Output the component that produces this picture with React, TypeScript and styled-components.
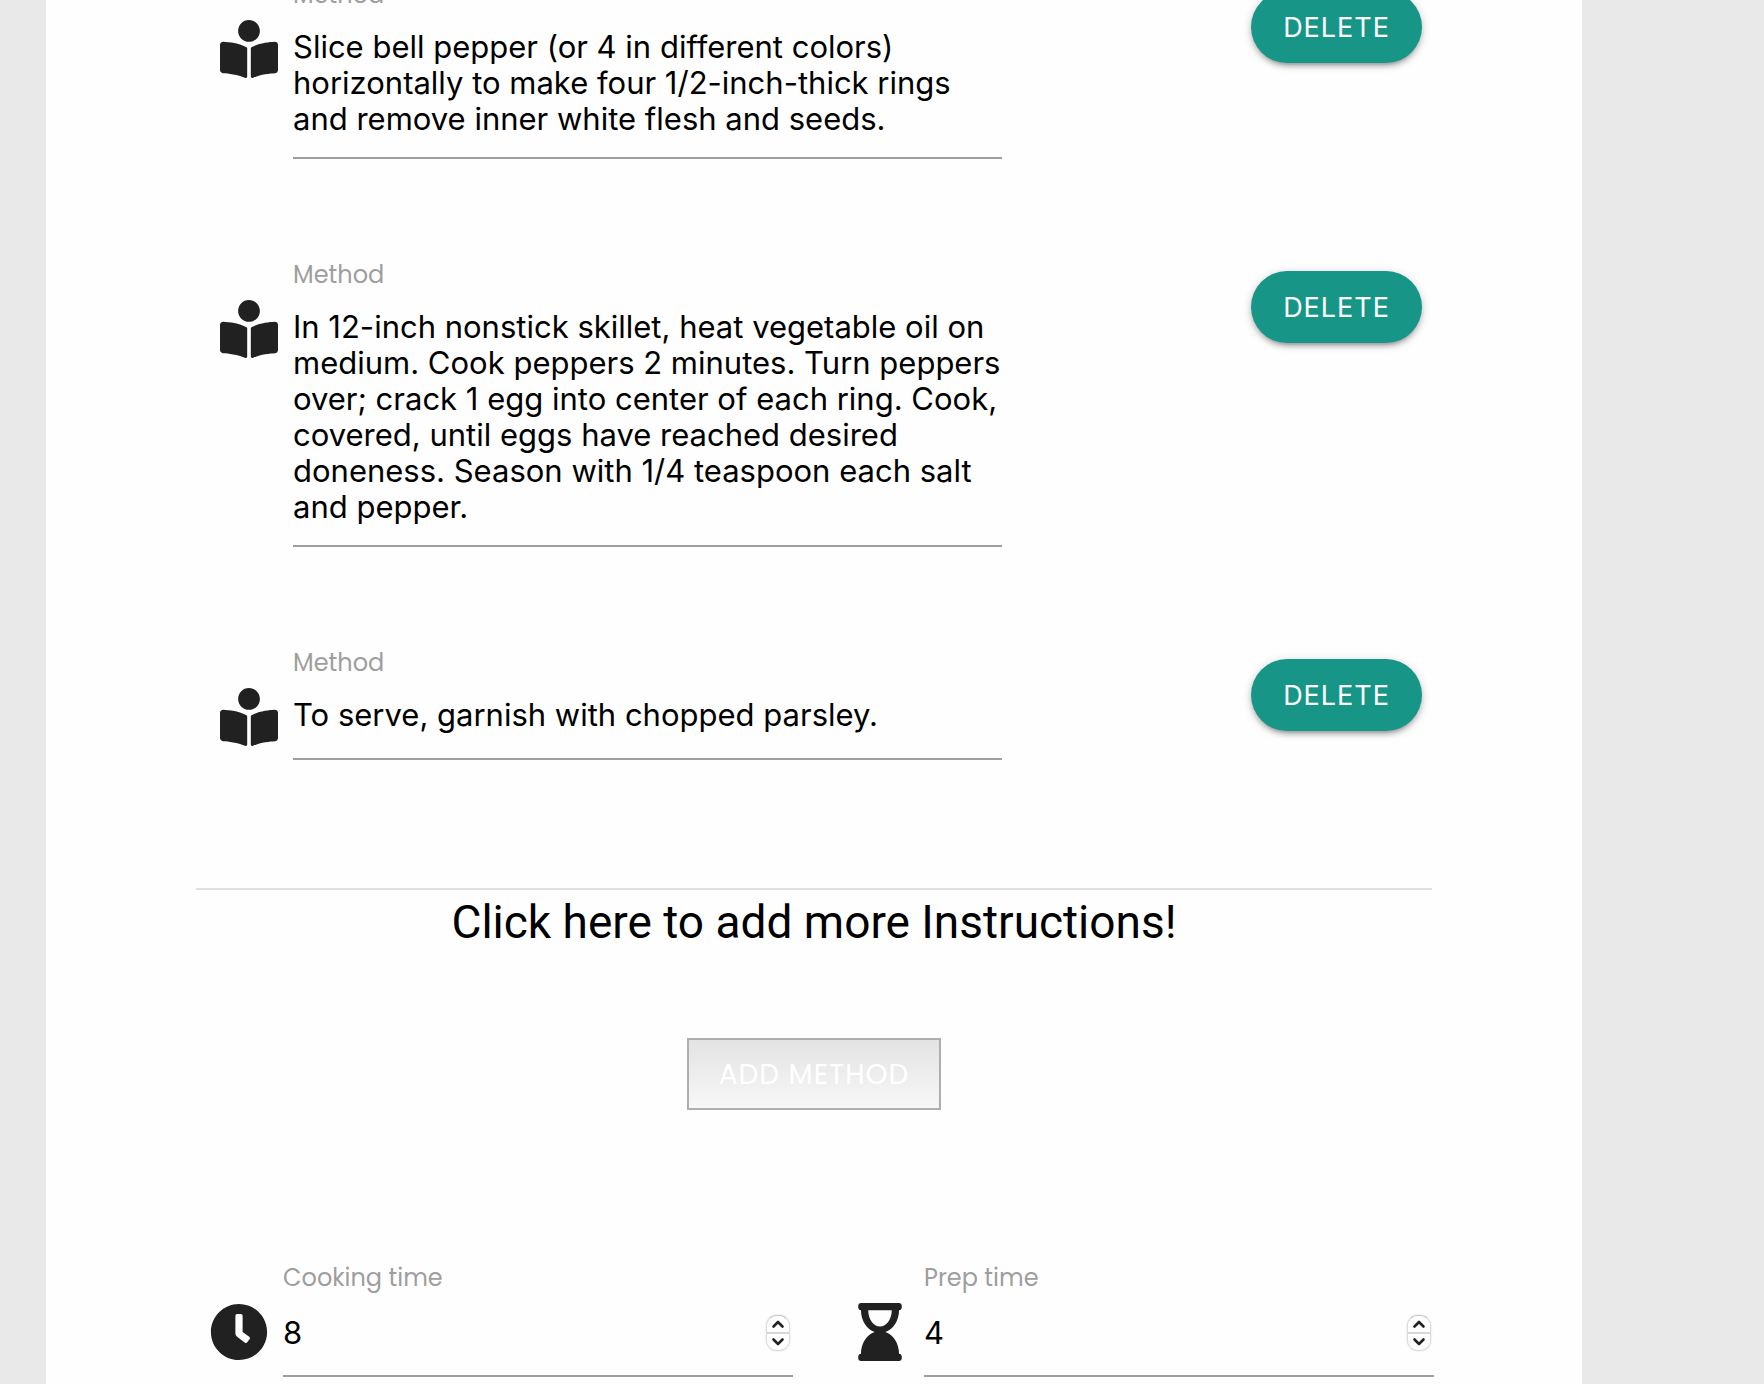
import React, { useId, useState } from "react";
import styled, { createGlobalStyle } from "styled-components";
import { FaBookReader, FaClock, FaHourglassEnd } from "react-icons/fa";

const sans = `Inter, "Noto Sans", sans-serif`;
const rounded = `Poppins, Inter, sans-serif`;

const GlobalStyle = createGlobalStyle`
  *, *::before, *::after { box-sizing: border-box; }
  body {
    margin: 0;
    background: #e9e9e9;
    color: #000;
    font-family: ${sans};
  }
`;

const Page = styled.div`
  display: flex;
  min-height: 100vh;
  padding: 0 182px 0 46px;
  overflow: hidden;
`;

const Sheet = styled.main`
  flex: 1;
  min-width: 0;
  padding: 0 150px;
  background: #fefefe;
`;

const RecipeForm = styled.form`
  display: flex;
  flex-direction: column;
`;

const MethodList = styled.div`
  display: flex;
  flex-direction: column;
  gap: 103px;
  margin-top: -18px;
  padding-bottom: 128px;
  border-bottom: 2px solid #e0e0e0;
`;

const MethodRow = styled.div`
  display: grid;
  grid-template-columns: 2fr 1fr;
  align-items: start;
`;

const Field = styled.div<{ $inset: string }>`
  display: flex;
  gap: 15px;
  padding: ${(p) => p.$inset};
`;

const IconBox = styled.span`
  display: flex;
  flex: none;
  justify-content: center;
  width: 58px;
  padding-top: 38px;
  color: #212121;

  svg {
    width: auto;
    height: 58px;
  }
`;

const FieldBody = styled.div`
  display: flex;
  flex: 1;
  flex-direction: column;
  min-width: 0;
`;

const Label = styled.label`
  color: #9e9e9e;
  font-family: ${rounded};
  font-size: 24px;
  line-height: 26px;
`;

const MethodText = styled.textarea`
  display: block;
  width: 100%;
  min-height: 84px;
  padding: 21px 0 20px;
  border: 0;
  border-bottom: 2px solid #9e9e9e;
  border-radius: 0;
  outline: 0;
  background: transparent;
  color: inherit;
  font-family: ${sans};
  font-size: 31px;
  line-height: 36px;
  overflow: hidden;
  resize: none;
  field-sizing: content;
`;

const ButtonCell = styled.div`
  display: flex;
  justify-content: flex-end;
  padding: 9px 10px 0 0;
`;

const Button = styled.button`
  height: 72px;
  padding: 0 32px;
  border: 0;
  color: #fff;
  letter-spacing: 1px;
  text-transform: uppercase;
  cursor: pointer;
`;

const DeleteButton = styled(Button)`
  border-radius: 36px;
  background: #179587;
  box-shadow: 0 4px 4px rgba(0, 0, 0, 0.14), 0 6px 2px -4px rgba(0, 0, 0, 0.12),
    0 2px 10px rgba(0, 0, 0, 0.2);
  font-family: ${sans};
  font-size: 27px;
`;

const AddButton = styled(Button)`
  align-self: center;
  padding: 2px 30px 0;
  border: 2px solid #aeaeae;
  background: linear-gradient(#e3e3e3, #f7f7f7);
  font-family: ${rounded};
  font-size: 28px;
`;

const Prompt = styled.h2`
  margin: 4px 0 88px;
  font-family: Roboto, sans-serif;
  font-size: 46px;
  font-weight: 400;
  line-height: 56px;
  text-align: center;
`;

const Times = styled.div`
  display: grid;
  grid-template-columns: 1fr 1fr;
  gap: 44px;
  margin-top: 155px;
`;

const NumberBox = styled.div`
  display: flex;
  align-items: center;
  height: 86px;
  padding-right: 3px;
  border-bottom: 2px solid #9e9e9e;
`;

const NumberInput = styled.input`
  flex: 1;
  min-width: 0;
  padding: 0;
  border: 0;
  outline: 0;
  background: transparent;
  color: inherit;
  font-family: ${sans};
  font-size: 31px;
  line-height: 36px;
  appearance: textfield;

  &::-webkit-inner-spin-button {
    display: none;
  }
`;

const Stepper = styled.div`
  display: flex;
  flex-direction: column;
  width: 24px;
  height: 36px;
  border: 1px solid #dcdcdc;
  border-top-color: #c4c4c4;
  border-radius: 11px;
  background: #fff;
  box-shadow: 0 0 2px rgba(0, 0, 0, 0.15);
  overflow: hidden;
`;

const Step = styled.button`
  display: flex;
  flex: 1;
  align-items: center;
  justify-content: center;
  padding: 0;
  border: 0;
  background: #fff;
  cursor: pointer;

  & + & {
    border-top: 2px solid #d6d6d6;
  }
`;

function Chevron({ down = false }: { down?: boolean }) {
  return (
    <svg width="14" height="10" viewBox="0 0 14 10" aria-hidden="true">
      <path
        d={down ? "M2.5 2.5 7 7l4.5-4.5" : "M2.5 7.5 7 3l4.5 4.5"}
        fill="none"
        stroke="#222"
        strokeWidth="2.6"
        strokeLinecap="round"
        strokeLinejoin="round"
      />
    </svg>
  );
}

interface Method {
  id: number;
  text: string;
}

const initialMethods: Method[] = [
  {
    id: 1,
    text: "Slice bell pepper (or 4 in different colors) horizontally to make four 1/2-inch-thick rings and remove inner white flesh and seeds.",
  },
  {
    id: 2,
    text: "In 12-inch nonstick skillet, heat vegetable oil on medium. Cook peppers 2 minutes. Turn peppers over; crack 1 egg into center of each ring. Cook, covered, until eggs have reached desired doneness. Season with 1/4 teaspoon each salt and pepper.",
  },
  { id: 3, text: "To serve, garnish with chopped parsley." },
];

function MethodField({
  method,
  onChange,
  onDelete,
}: {
  method: Method;
  onChange: (text: string) => void;
  onDelete: () => void;
}) {
  const id = useId();
  return (
    <MethodRow>
      <Field $inset="0 18px 0 24px">
        <IconBox>
          <FaBookReader />
        </IconBox>
        <FieldBody>
          <Label htmlFor={id}>Method</Label>
          <MethodText
            id={id}
            rows={1}
            spellCheck={false}
            value={method.text}
            onChange={(e) => onChange(e.target.value)}
          />
        </FieldBody>
      </Field>
      <ButtonCell>
        <DeleteButton type="button" onClick={onDelete}>
          Delete
        </DeleteButton>
      </ButtonCell>
    </MethodRow>
  );
}

function TimeField({
  label,
  icon,
  initial,
}: {
  label: string;
  icon: React.ReactNode;
  initial: number;
}) {
  const id = useId();
  const [value, setValue] = useState(initial);
  return (
    <Field $inset="0 0 0 14px">
      <IconBox>{icon}</IconBox>
      <FieldBody>
        <Label htmlFor={id}>{label}</Label>
        <NumberBox>
          <NumberInput
            id={id}
            type="number"
            value={value}
            onChange={(e) => setValue(Number(e.target.value))}
          />
          <Stepper>
            <Step type="button" aria-label={`Increase ${label}`} onClick={() => setValue(value + 1)}>
              <Chevron />
            </Step>
            <Step type="button" aria-label={`Decrease ${label}`} onClick={() => setValue(value - 1)}>
              <Chevron down />
            </Step>
          </Stepper>
        </NumberBox>
      </FieldBody>
    </Field>
  );
}

export default function App() {
  const [methods, setMethods] = useState(initialMethods);

  const update = (id: number, text: string) =>
    setMethods(methods.map((m) => (m.id === id ? { ...m, text } : m)));
  const remove = (id: number) => setMethods(methods.filter((m) => m.id !== id));
  const add = () => setMethods([...methods, { id: Date.now(), text: "" }]);

  return (
    <>
      <GlobalStyle />
      <Page>
        <Sheet>
          <RecipeForm>
            <MethodList>
              {methods.map((m) => (
                <MethodField
                  key={m.id}
                  method={m}
                  onChange={(text) => update(m.id, text)}
                  onDelete={() => remove(m.id)}
                />
              ))}
            </MethodList>
            <Prompt>Click here to add more Instructions!</Prompt>
            <AddButton type="button" onClick={add}>
              Add Method
            </AddButton>
            <Times>
              <TimeField label="Cooking time" icon={<FaClock />} initial={8} />
              <TimeField label="Prep time" icon={<FaHourglassEnd />} initial={4} />
            </Times>
          </RecipeForm>
        </Sheet>
      </Page>
    </>
  );
}
